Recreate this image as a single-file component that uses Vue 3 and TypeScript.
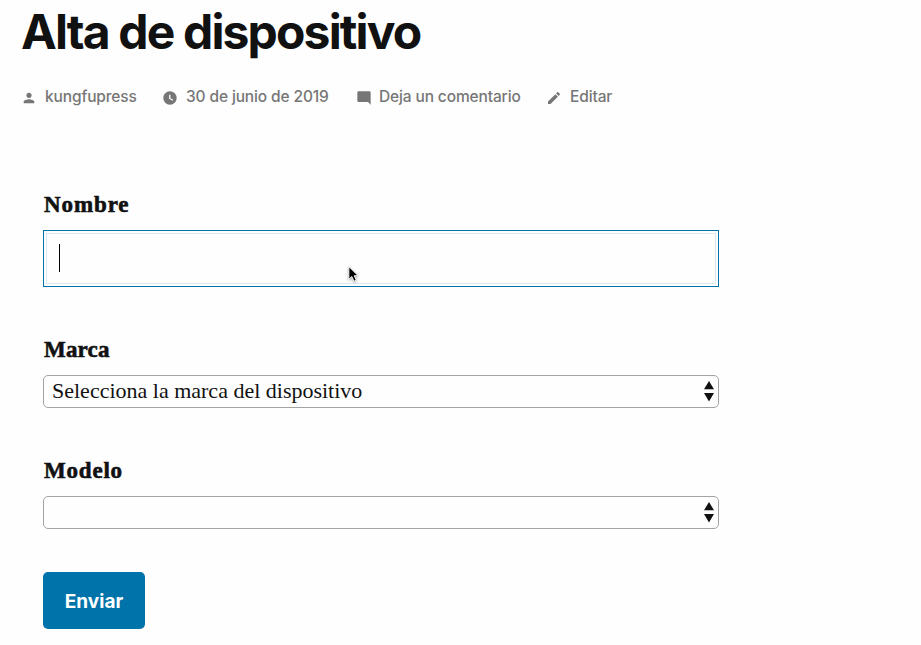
<script setup lang="ts">
import { ref } from 'vue'

interface MetaItem {
  id: string
  text: string
  icon: string
}

interface SelectField {
  id: string
  label: string
  placeholder: string
}

const meta: MetaItem[] = [
  {
    id: 'author',
    text: 'kungfupress',
    icon: 'M12 12c2.21 0 4-1.79 4-4s-1.79-4-4-4-4 1.79-4 4 1.79 4 4 4zm0 2c-2.67 0-8 1.34-8 4v2h16v-2c0-2.66-5.33-4-8-4z',
  },
  {
    id: 'date',
    text: '30 de junio de 2019',
    icon: 'M12 2C6.500 2 2 6.500 2 12s4.500 10 10 10 10-4.500 10-10S17.500 2 12 2zm4.200 14.200L10.600 13V7h2v5.200l4.400 2.600-.8 1.400z',
  },
  {
    id: 'comments',
    text: 'Deja un comentario',
    icon: 'M21.990 4c0-1.100-.89-2-1.990-2H4c-1.100 0-2 .9-2 2v12c0 1.100.9 2 2 2h14l4 4-.01-18z',
  },
  {
    id: 'edit',
    text: 'Editar',
    icon: 'M3 17.250V21h3.750L17.810 9.940l-3.750-3.750L3 17.250zM20.710 7.040c.39-.39.39-1.020 0-1.410l-2.340-2.340c-.39-.39-1.020-.39-1.410 0l-1.830 1.830 3.750 3.750 1.830-1.830z',
  },
]

const selects: SelectField[] = [
  { id: 'marca', label: 'Marca', placeholder: 'Selecciona la marca del dispositivo' },
  { id: 'modelo', label: 'Modelo', placeholder: '' },
]

const nombre = ref('')
</script>

<template>
  <main class="entry">
    <header>
      <h1 class="title">Alta de dispositivo</h1>
      <div class="meta">
        <span v-for="item in meta" :key="item.id" class="meta-item" :class="item.id">
          <svg class="icon" viewBox="0 0 24 24" aria-hidden="true"><path :d="item.icon" /></svg>
          <span class="meta-text">{{ item.text }}</span>
        </span>
      </div>
    </header>

    <form class="form" @submit.prevent>
      <div class="field nombre">
        <label class="label" for="nombre">Nombre</label>
        <div class="input-wrap">
          <input id="nombre" v-model="nombre" class="input" type="text" />
          <span class="caret"></span>
          <svg class="pointer" viewBox="0 0 14 20" aria-hidden="true">
            <path d="M2 1.500V15.200L5.200 12.200L7.500 17.300L10 16.200L7.800 11.300H12Z" />
          </svg>
        </div>
      </div>

      <div v-for="s in selects" :key="s.id" class="field" :class="s.id">
        <label class="label" :for="s.id">{{ s.label }}</label>
        <div class="select-wrap">
          <select :id="s.id" class="select">
            <option>{{ s.placeholder }}</option>
          </select>
          <svg class="arrows" viewBox="0 0 12 22" aria-hidden="true">
            <path d="M6 1L11 9.300H1ZM6 21.500L11 13H1Z" />
          </svg>
        </div>
      </div>

      <button class="submit" type="submit">Enviar</button>
    </form>
  </main>
</template>

<style>
body {
  background: #fefefe;
}
</style>

<style scoped>
.entry {
  box-sizing: border-box;
  height: 645px;
  padding: 2px 0 0 21px;
  overflow: hidden;
  color: #111;
}

.title {
  margin: 0;
  font: 700 48px/60px Inter, sans-serif;
  letter-spacing: -1.85px;
  white-space: nowrap;
}

.meta {
  display: flex;
  height: 24px;
  margin-top: 23px;
  color: #767676;
  font: 500 15.5px/24px Inter, sans-serif;
}

.meta-item {
  display: flex;
  align-items: center;
  gap: 8px;
  white-space: nowrap;
}

.author {
  width: 141px;
}

.date {
  width: 194px;
}

.comments {
  width: 190px;
}

.icon {
  flex: none;
  width: 16px;
  height: 16px;
  margin-top: 1px;
  fill: currentColor;
}

.meta-text {
  letter-spacing: -0.13px;
}

.comments .meta-text {
  margin-left: -1px;
}

.form {
  width: 676px;
  margin: 80px 0 0 22px;
}

.field {
  display: flex;
  flex-direction: column;
}

.label {
  height: 30px;
  margin-bottom: 11px;
  padding-left: 1px;
  font: 700 23px/32px "Liberation Serif", serif;
  letter-spacing: 0.8px;
  -webkit-text-stroke: 0.6px #111;
}

.nombre,
.marca {
  margin-bottom: 47px;
}

.nombre .label {
  letter-spacing: 0.9px;
}

.marca .label {
  letter-spacing: 0.2px;
}

.input-wrap,
.select-wrap {
  position: relative;
  display: flex;
}

.input {
  box-sizing: border-box;
  width: 100%;
  height: 57px;
  padding: 8px 14px;
  border: 1px solid #0073aa;
  background: #fefefe;
  outline: 1px solid #dbe7f3;
  outline-offset: -4px;
  font: 22px "Liberation Serif", serif;
}

.caret {
  position: absolute;
  top: 14px;
  left: 16px;
  width: 1px;
  height: 28px;
  background: #000;
}

.pointer {
  position: absolute;
  top: 35px;
  left: 304px;
  width: 13px;
  height: 19px;
  fill: #000;
  stroke: #fff;
  stroke-width: 1px;
  filter: drop-shadow(0 1px 1px rgba(0, 0, 0, 0.35));
}

.select {
  box-sizing: border-box;
  width: 100%;
  height: 33px;
  padding: 0 28px 2px 8px;
  border: 1px solid #a3a3a3;
  border-radius: 5px;
  background: #fefefe;
  color: #111;
  appearance: none;
  font: 22px "Liberation Serif", serif;
}

.arrows {
  position: absolute;
  top: 5px;
  right: 4px;
  width: 12px;
  height: 22px;
  fill: #111;
}

.submit {
  display: block;
  width: 102px;
  height: 57px;
  margin-top: 43px;
  padding: 2px 0 0;
  border: 0;
  border-radius: 5px;
  background: #0073aa;
  color: #fff;
  font: 700 19px/55px Inter, sans-serif;
}
</style>
